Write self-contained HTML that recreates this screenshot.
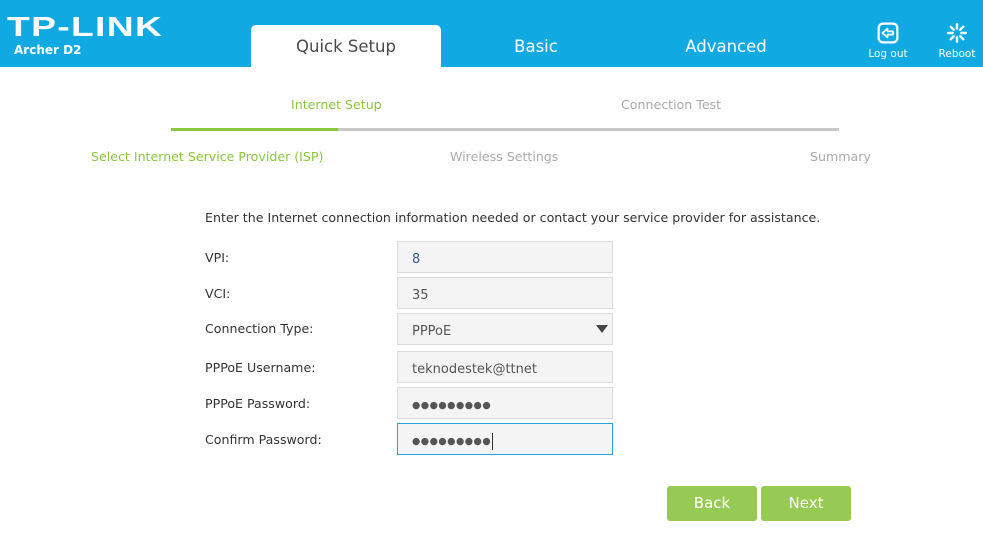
<!DOCTYPE html>
<html><head><meta charset="utf-8"><style>
*{margin:0;padding:0;box-sizing:border-box}
body{width:983px;height:551px;background:#fff;font-family:"DejaVu Sans","Liberation Sans",sans-serif;position:relative;overflow:hidden;color:#333}
.hdr{position:absolute;left:0;top:0;width:983px;height:67px;background:#10a9e1}
.logo{position:absolute;left:7px;top:13px;color:#fff;font-family:"Liberation Sans",sans-serif;font-weight:bold;font-size:28px;letter-spacing:1px;transform:scaleX(1.33);transform-origin:left;line-height:28px}
.model{position:absolute;left:14px;top:43px;color:#fff;font-weight:bold;font-size:12px}
.tab{position:absolute;top:25px;height:42px;width:190px;text-align:center;font-size:16.5px;line-height:44px;color:#fff}
.tab.on{background:#fff;color:#4a4a4a;border-radius:5px 5px 0 0}
.ic{position:absolute;top:22px;color:#fff;font-size:10.5px;text-align:center;width:56px}
.ic svg{display:block;margin:0 auto 4px}
.s{position:absolute;font-size:12.6px;color:#aaa;white-space:nowrap}
.g{color:#8cc63f}
.bar{position:absolute;top:128px;height:3px}
.lbl{position:absolute;left:205px;font-size:12.6px;color:#333}
.in{position:absolute;left:397px;width:216px;height:32px;background:#f4f4f4;border:1px solid #ddd;font-size:13px;color:#555;padding-left:14px;padding-top:3px;line-height:30px}
.dots{letter-spacing:0.5px;font-size:9.5px}
.btn{position:absolute;top:486px;height:35px;width:90px;background:#96ca55;color:#fff;font-size:15px;text-align:center;line-height:35px;border-radius:3px}
</style></head><body>
<div class="hdr">
<div class="logo">TP-LINK</div>
<div class="model">Archer D2</div>
<div class="tab on" style="left:251px">Quick Setup</div>
<div class="tab" style="left:441px">Basic</div>
<div class="tab" style="left:631px">Advanced</div>
<div class="ic" style="left:860px"><svg width="22" height="22" viewBox="0 0 20 20"><rect x="1.5" y="1.5" width="17" height="17" rx="4" fill="none" stroke="#fff" stroke-width="2"/><path d="M5 10 L9.5 6 V8.5 H14.5 V11.5 H9.5 V14 Z" fill="none" stroke="#fff" stroke-width="1.6" stroke-linejoin="round"/></svg>Log out</div>
<div class="ic" style="left:929px"><svg width="22" height="22" viewBox="0 0 20 20" stroke="#fff" stroke-width="2.2" stroke-linecap="round"><path d="M10 2v4M10 14v4M2 10h4M14 10h4M4.3 4.3l2.8 2.8M12.9 12.9l2.8 2.8M4.3 15.7l2.8-2.8M12.9 7.1l2.8-2.8"/></svg>Reboot</div>
</div>
<div class="s g" style="left:291px;top:97px">Internet Setup</div>
<div class="s" style="left:621px;top:97px">Connection Test</div>
<div class="bar" style="left:171px;width:167px;background:#8cc63f"></div>
<div class="bar" style="left:338px;width:501px;background:#c8c8c8"></div>
<div class="s g" style="left:91px;top:149px">Select Internet Service Provider (ISP)</div>
<div class="s" style="left:450px;top:149px">Wireless Settings</div>
<div class="s" style="left:810px;top:149px">Summary</div>
<div class="lbl" style="top:210px">Enter the Internet connection information needed or contact your service provider for assistance.</div>
<div class="lbl" style="top:250px">VPI:</div>
<div class="lbl" style="top:286px">VCI:</div>
<div class="lbl" style="top:321px">Connection Type:</div>
<div class="lbl" style="top:360px">PPPoE Username:</div>
<div class="lbl" style="top:396px">PPPoE Password:</div>
<div class="lbl" style="top:432px">Confirm Password:</div>
<div class="in" style="top:241px;color:#3a5a8a">8</div>
<div class="in" style="top:277px">35</div>
<div class="in" style="top:313px">PPPoE<svg style="position:absolute;right:4px;top:11px" width="12" height="8"><path d="M0 0H12L6 8Z" fill="#444"/></svg></div>
<div class="in" style="top:351px">teknodestek@ttnet</div>
<div class="in dots" style="top:387px">●●●●●●●●●</div>
<div class="in dots" style="top:423px;border-color:#2a9fd8">●●●●●●●●●<span style="display:inline-block;width:1px;height:17px;background:#333;vertical-align:middle;margin-left:1px"></span></div>
<div class="btn" style="left:667px">Back</div>
<div class="btn" style="left:761px">Next</div>
</body></html>
